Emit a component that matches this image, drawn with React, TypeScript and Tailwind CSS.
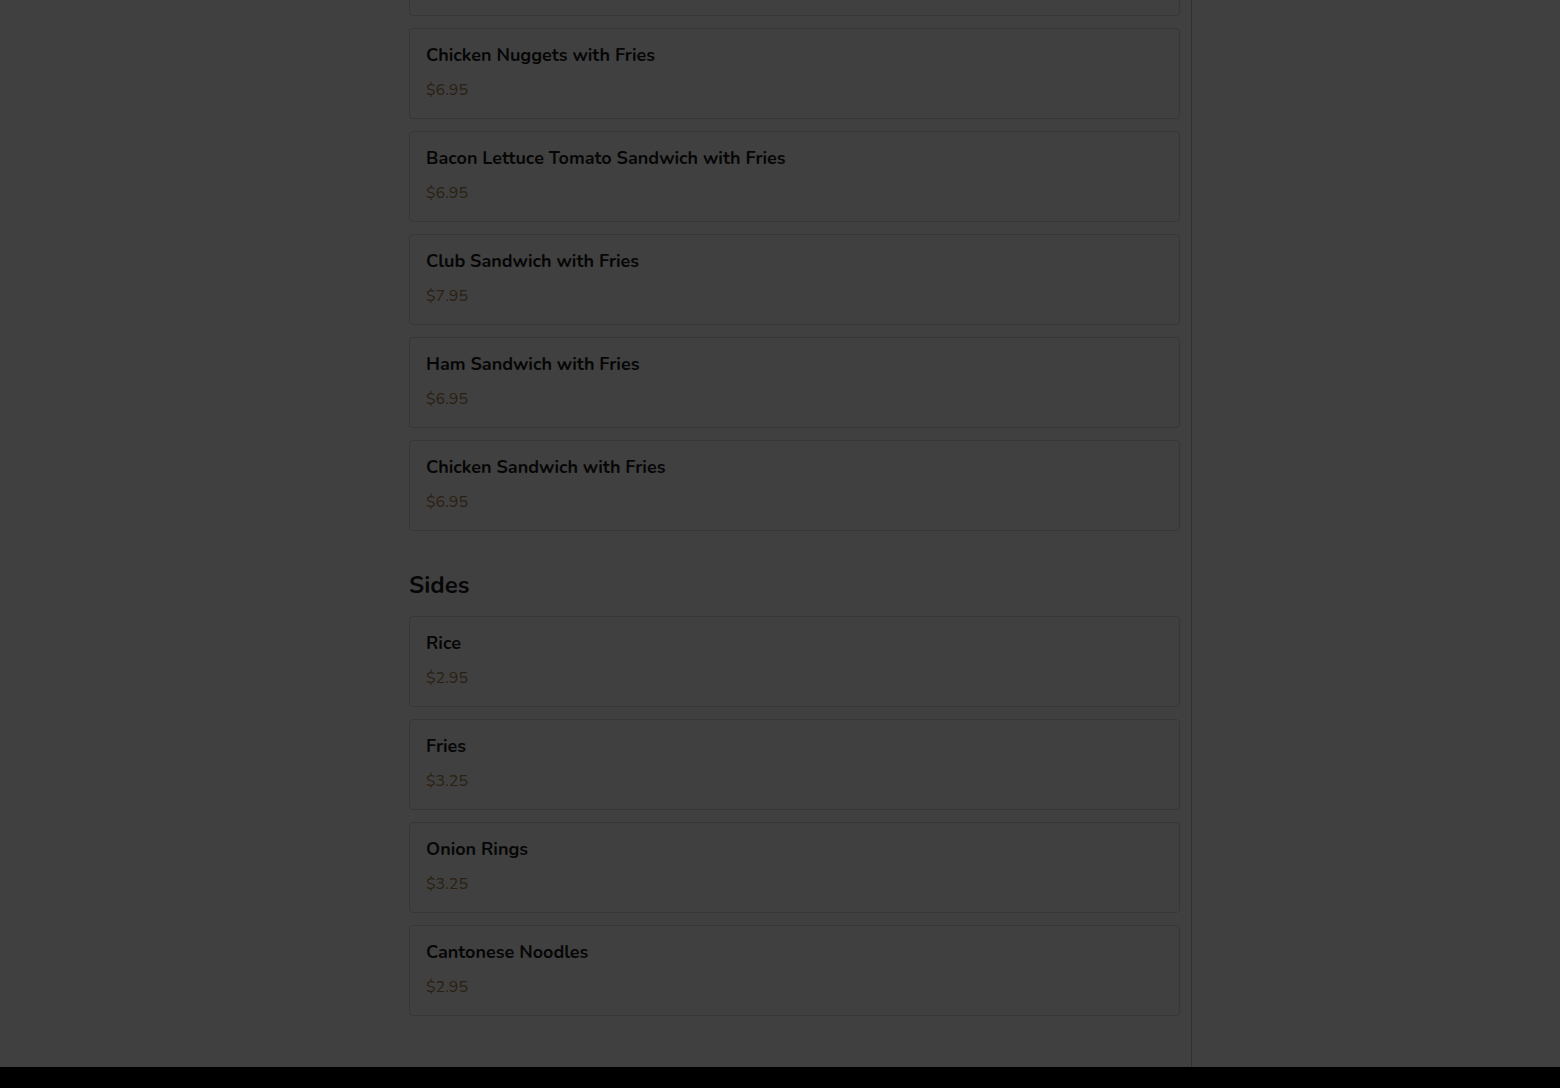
import React from "react";

type Item = { name: string; price: string };

const mains: Item[] = [
  { name: "Hot Dog with Fries", price: "$5.95" },
  { name: "Chicken Nuggets with Fries", price: "$6.95" },
  { name: "Bacon Lettuce Tomato Sandwich with Fries", price: "$6.95" },
  { name: "Club Sandwich with Fries", price: "$7.95" },
  { name: "Ham Sandwich with Fries", price: "$6.95" },
  { name: "Chicken Sandwich with Fries", price: "$6.95" },
];

const sides: Item[] = [
  { name: "Rice", price: "$2.95" },
  { name: "Fries", price: "$3.25" },
  { name: "Onion Rings", price: "$3.25" },
  { name: "Cantonese Noodles", price: "$2.95" },
];

function MenuCard({ item }: { item: Item }) {
  return (
    <div className="h-[91px] rounded-[4px] border border-[#d6d6d6] bg-white px-4 pt-[15px]">
      <h5 className="text-[18px] font-bold leading-[22px] text-[#1a1a1a]">{item.name}</h5>
      <p className="mt-[12px] text-[16px] leading-6 text-[#a8804a]">{item.price}</p>
    </div>
  );
}

export default function App() {
  return (
    <div
      className="relative min-h-[1088px] overflow-hidden bg-white"
      style={{ fontFamily: "Nunito, Lato, 'Noto Sans', sans-serif" }}
    >
      <div className="flex">
        <div className="w-[397px] shrink-0" />
        <main className="w-[795px] shrink-0 border-r border-[#c4c4c4] pl-3 pr-[11px]">
          <div className="mt-[-75px] space-y-3">
            {mains.map((item) => (
              <MenuCard key={item.name} item={item} />
            ))}
          </div>

          <h3 className="mt-[40px] mb-[16px] text-[24px] font-bold leading-[29px] text-[#1a1a1a]">
            Sides
          </h3>
          <div className="space-y-3">
            {sides.map((item) => (
              <MenuCard key={item.name} item={item} />
            ))}
          </div>
          <div className="h-[51px]" />
        </main>
      </div>
      <footer className="h-[21px] bg-black" />

      <div className="fixed inset-0 bg-black/75" />
    </div>
  );
}
